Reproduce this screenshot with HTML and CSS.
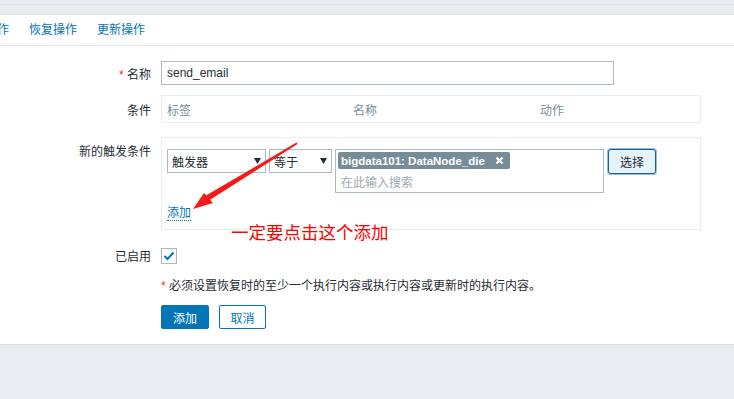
FILE: index.html
```html
<!DOCTYPE html>
<html lang="zh-CN">
<head>
    <meta charset="UTF-8">
    <meta name="viewport" content="width=device-width, initial-scale=1.0">
    <title>动作</title>
    <link rel="stylesheet" href="styles.css">
</head>
<body>
  <div class="topbar"></div>

  <div class="panel">
    <ul class="tabs">
      <li>操作</li>
      <li>恢复操作</li>
      <li>更新操作</li>
    </ul>

    <form class="form">
      <div class="row row-name">
        <label class="label"><span class="req">*</span> 名称</label>
        <input class="text-input" type="text" value="send_email">
      </div>

      <div class="row row-cond">
        <label class="label">条件</label>
        <div class="cond-table">
          <span>标签</span>
          <span>名称</span>
          <span>动作</span>
        </div>
      </div>

      <div class="row row-trigger">
        <label class="label label-top">新的触发条件</label>
        <div class="trigger-box">
          <div class="trigger-line">
            <div class="select select-type">触发器
              <svg class="caret" width="7" height="6" viewBox="0 0 7 6"><path d="M0 0h7L3.5 6z"/></svg>
            </div>
            <div class="select select-op">等于
              <svg class="caret" width="7" height="6" viewBox="0 0 7 6"><path d="M0 0h7L3.5 6z"/></svg>
            </div>
            <div class="multi">
              <span class="tag">bigdata101: DataNode_die
                <svg class="tag-x" width="9" height="9" viewBox="0 0 9 9"><path d="M1.5 1.5l6 6M7.5 1.5l-6 6"/></svg>
              </span>
              <span class="placeholder">在此输入搜索</span>
            </div>
            <button type="button" class="btn-select">选择</button>
          </div>
          <a class="link-add" href="#">添加</a>
        </div>
      </div>

      <div class="row row-enabled">
        <label class="label">已启用</label>
        <span class="checkbox">
          <svg width="12" height="10" viewBox="0 0 12 10"><path d="M1.5 5l3 3 6-6.5"/></svg>
        </span>
      </div>

      <div class="row row-note">
        <span></span>
        <p class="note"><span class="req">*</span> 必须设置恢复时的至少一个执行内容或执行内容或更新时的执行内容。</p>
      </div>

      <div class="row row-buttons">
        <span></span>
        <div class="actions">
          <button type="button" class="btn btn-primary">添加</button>
          <button type="button" class="btn btn-alt">取消</button>
        </div>
      </div>
    </form>
  </div>

  <!-- screenshot annotation -->
  <svg class="arrow" width="734" height="399" viewBox="0 0 734 399">
    <path d="M296.5 142.5L297.5 144L209 200.5L206 195.5z"/>
    <path d="M193 209L204 193L213 203z"/>
  </svg>
  <div class="hint">一定要点击这个添加</div>
</body>
</html>
```

FILE: styles.css
```css
* {
   box-sizing: border-box;
}

body {
   margin: 0;
   position: relative;
   height: 399px;
   overflow: hidden;
   background: #e9edf0;
   color: #1f2c33;
   font-family: "Liberation Sans", "Noto Sans CJK SC", sans-serif;
   font-size: 12px;
}

.topbar {
   height: 15px;
   border-top: 4px solid #e9edf0;
   box-shadow: inset 0 1px 0 #dde2e6;
   border-bottom: 1px solid #dfe4e7;
}

.panel {
   background: #fff;
   border-bottom: 1px solid #d9dee2;
}

.tabs {
   display: flex;
   gap: 20px;
   margin: 0 0 0 -15px;
   padding: 0;
   list-style: none;
   border-bottom: 1px solid #e6e9eb;
}

.tabs li {
   line-height: 30px;
   color: #0275b8;
}

.form {
   padding: 15px 0 15px 0;
}

.row {
   display: grid;
   grid-template-columns: 151px 1fr;
   column-gap: 10px;
   align-items: center;
}

.label {
   text-align: right;
   white-space: nowrap;
}

.label-top {
   align-self: start;
   padding-top: 5px;
}

.req {
   color: #e33734;
}

.text-input {
   width: 453px;
   height: 24px;
   border: 1px solid #acbbc2;
   padding: 0 5px;
   font: inherit;
   color: #1f2c33;
   outline: none;
}

.row-cond {
   margin-top: 10px;
}

.cond-table {
   width: 540px;
   height: 28px;
   border: 1px solid #ebeef0;
   display: grid;
   grid-template-columns: 186px 187px 1fr;
   align-items: center;
   padding-left: 5px;
   color: #768d99;
}

.row-trigger {
   margin-top: 14px;
}

.trigger-box {
   width: 540px;
   height: 93px;
   border: 1px solid #ebeef0;
   padding: 11px 5px 0 5px;
}

.trigger-line {
   display: flex;
   align-items: flex-start;
}

.select {
   height: 24px;
   border: 1px solid #acbbc2;
   display: flex;
   align-items: center;
   justify-content: space-between;
   padding: 0 4px 0 4px;
   margin-right: 3px;
}

.select-type {
   width: 99px;
}

.select-op {
   width: 63px;
}

.caret {
   fill: #1f2c33;
}

.multi {
   width: 269px;
   height: 44px;
   border: 1px solid #acbbc2;
   padding: 2px;
   display: flex;
   flex-direction: column;
   align-items: flex-start;
   margin-right: 4px;
}

.tag {
   display: inline-flex;
   align-items: center;
   gap: 10px;
   height: 18px;
   padding: 0 6px 0 3px;
   background: #768d99;
   border-radius: 2px;
   color: #fff;
   font-weight: bold;
   font-size: 11.5px;
}

.tag-x {
   stroke: #fff;
   stroke-width: 2.2;
}

.placeholder {
   margin: 4px 0 0 3px;
   color: #a1aab0;
}

.btn-select {
   width: 48px;
   height: 25px;
   border: 1px solid #1b5f92;
   border-radius: 3px;
   background: #e6f2fc;
   box-shadow: 0 0 0 1px #8fbde3;
   font: inherit;
   color: #1f2c33;
   padding: 0;
}

.link-add {
   display: inline-block;
   margin-top: 13px;
   color: #0275b8;
   text-decoration: none;
   line-height: 14px;
   border-bottom: 1px dotted #0275b8;
}

.row-enabled {
   margin-top: 17px;
}

.checkbox {
   width: 16px;
   height: 16px;
   border: 1px solid #acbbc2;
   display: flex;
   align-items: center;
   justify-content: center;
}

.checkbox svg {
   fill: none;
   stroke: #0275b8;
   stroke-width: 2;
}

.row-note {
   margin-top: 15px;
}

.note {
   margin: 0;
   line-height: 14px;
}

.row-buttons {
   margin-top: 12px;
}

.actions {
   display: flex;
   gap: 10px;
}

.btn {
   height: 24px;
   border: 1px solid #0275b8;
   border-radius: 2px;
   font: inherit;
   padding: 0;
}

.btn-primary {
   width: 48px;
   background: #0275b8;
   color: #fff;
}

.btn-alt {
   width: 47px;
   background: #fff;
   color: #0275b8;
}

.arrow {
   position: absolute;
   left: 0;
   top: 0;
   fill: #f41a1a;
   pointer-events: none;
}

.hint {
   position: absolute;
   left: 231px;
   top: 221px;
   line-height: 22px;
   font-size: 17.5px;
   color: #ff0000;
   font-family: "Noto Sans CJK SC", sans-serif;
}
```
